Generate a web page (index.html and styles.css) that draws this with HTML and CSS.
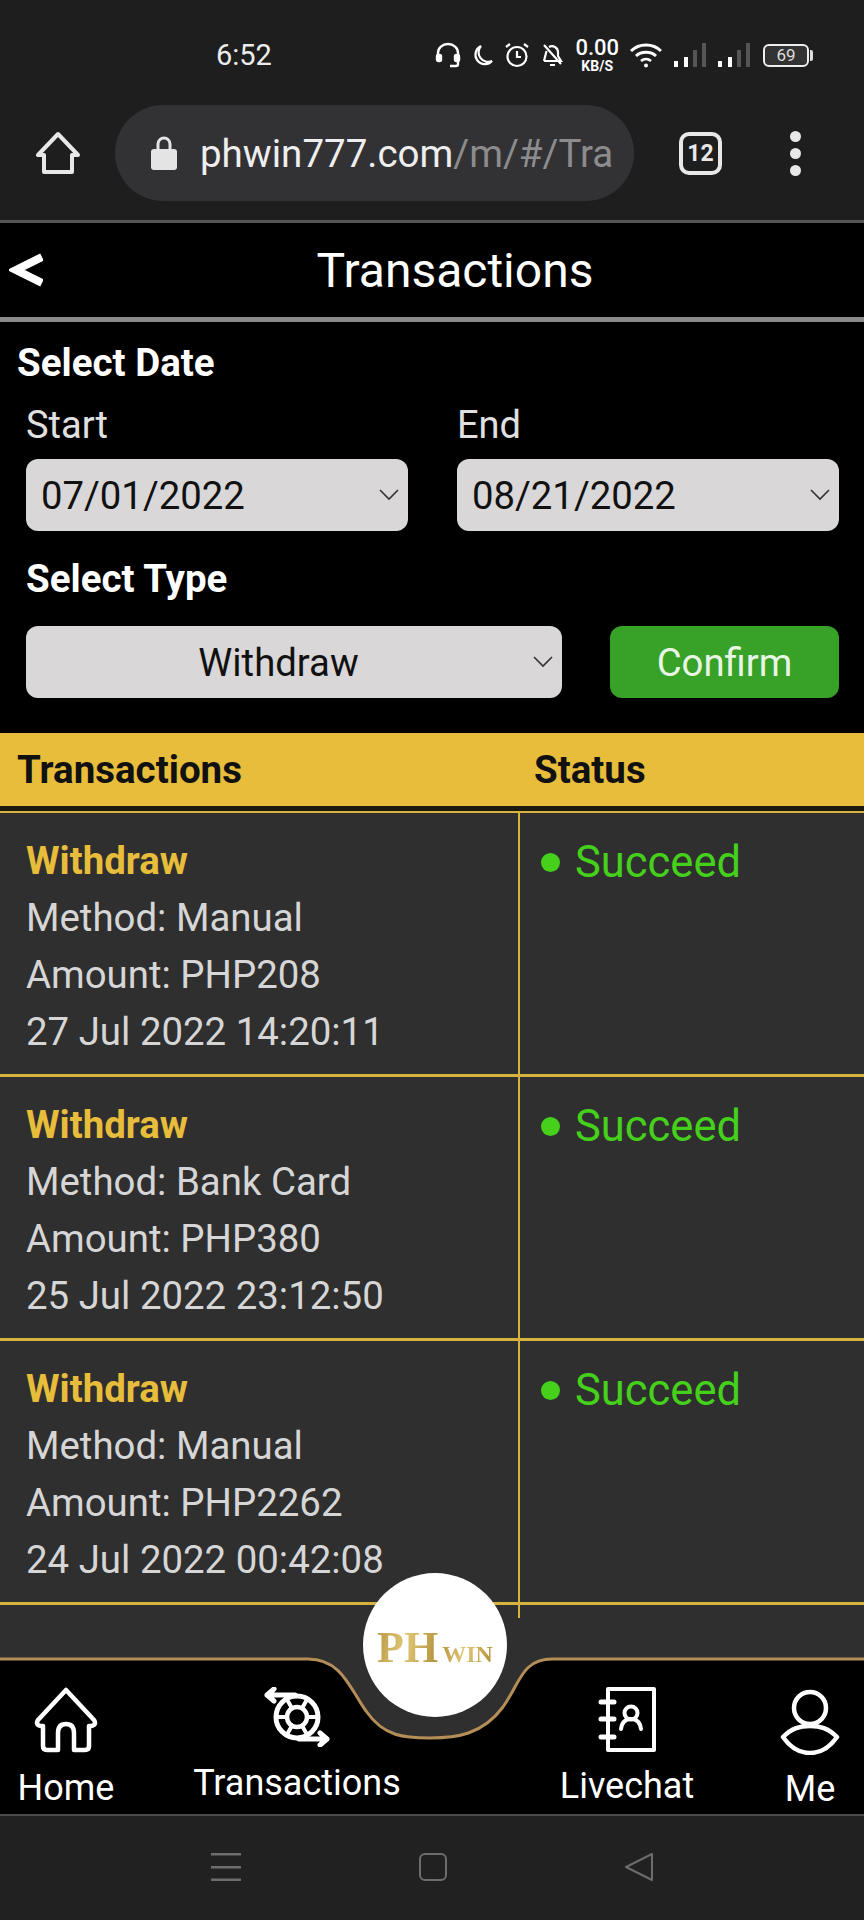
FILE: index.html
```html
<!DOCTYPE html>
<html lang="en">
<head>
  <meta charset="UTF-8" />
  <meta name="viewport" content="width=device-width, initial-scale=1.0"/>
  <title>Transactions</title>
  <link rel="stylesheet" href="styles.css">
</head>
<body>
  <div class="phone">
    <div class="status-bar">
      <span class="clock">6:52</span>
      <div class="status-icons">
        <svg width="26" height="26" viewBox="0 0 26 26" fill="none" stroke="#fff" stroke-width="2.4"><path d="M3 16V11a10 9 0 0 1 20 0v5"/><rect x="2" y="13" width="4" height="6" rx="1.5" fill="#fff"/><rect x="20" y="13" width="4" height="6" rx="1.5" fill="#fff"/><path d="M23 19v3a2 2 0 0 1-2 2h-6"/></svg>
        <svg class="moon" width="22" height="22" viewBox="0 0 22 22" fill="none" stroke="#fff" stroke-width="2.2"><path d="M9 2a9.500 9.500 0 0 0 11 15A9.500 9.500 0 1 1 9 2z"/></svg>
        <svg width="26" height="26" viewBox="0 0 26 26" fill="none" stroke="#fff" stroke-width="2.2"><circle cx="13" cy="14.500" r="9.500"/><path d="M13 9v6h4M2 5l4-3M24 5l-4-3"/></svg>
        <svg width="24" height="26" viewBox="0 0 24 26" fill="none" stroke="#fff" stroke-width="2.2"><path d="M4 19h17l-3-5V10a6 6 0 0 0-9-5M6.500 9L4 19"/><path d="M4 3l17 19M10 23h5"/></svg>
        <div class="speed"><span class="speed-num">0.00</span><span class="speed-unit">KB/S</span></div>
        <svg class="wifi" width="34" height="26" viewBox="0 0 34 26" fill="none" stroke="#fff" stroke-width="2.8"><path d="M2 9c8-8 22-8 30 0M7 14c5-5 15-5 20 0M12 19c3-2.500 7-2.500 10 0"/><circle cx="17" cy="23.500" r="2" fill="#fff" stroke="none"/></svg>
        <svg width="34" height="26" viewBox="0 0 34 26"><rect x="1" y="19" width="4" height="6" fill="#fff"/><rect x="11" y="15" width="4" height="10" fill="#fff"/><rect x="20" y="8" width="4" height="17" fill="#555"/><rect x="29" y="1" width="4" height="24" fill="#555"/></svg>
        <svg width="34" height="26" viewBox="0 0 34 26"><rect x="1" y="19" width="4" height="6" fill="#fff"/><rect x="11" y="15" width="4" height="10" fill="#fff"/><rect x="20" y="8" width="4" height="17" fill="#555"/><rect x="29" y="1" width="4" height="24" fill="#555"/></svg>
        <div class="battery"><span class="battery-level">69</span></div>
      </div>
    </div>

    <div class="toolbar">
      <svg class="tool-home" width="44" height="44" viewBox="0 0 44 44" fill="none" stroke="#e8e8e8" stroke-width="4" stroke-linejoin="round"><path d="M22 3L2 24h6v17h28V24h6z"/></svg>
      <div class="url-pill">
        <svg class="lock" width="28" height="36" viewBox="0 0 28 36"><path d="M8 16V9a6 6 0 0 1 12 0v7" fill="none" stroke="#e4e4e4" stroke-width="3"/><rect x="1" y="14" width="26" height="21" rx="3" fill="#e4e4e4"/></svg>
        <div class="url-text"><span class="url-host">phwin777.com</span>/m/#/Tra</div>
      </div>
      <div class="tab-count">12</div>
      <div class="tool-dots"><i></i><i></i><i></i></div>
    </div>

    <header class="app-header">
      <svg class="back" width="34" height="34" viewBox="0 0 34 34" fill="none" stroke="#fff" stroke-width="8"><path d="M33 4L7 17l26 13"/></svg>
      <h1>Transactions</h1>
    </header>

    <section class="filters">
      <h2 class="date-title">Select Date</h2>
      <div class="date-row">
        <div class="date-field">
          <label>Start</label>
          <div class="picker">07/01/2022<svg width="20" height="12" viewBox="0 0 20 12" fill="none" stroke="#333" stroke-width="1.600"><path d="M1 1l9 9 9-9"/></svg></div>
        </div>
        <div class="date-field">
          <label>End</label>
          <div class="picker">08/21/2022<svg width="20" height="12" viewBox="0 0 20 12" fill="none" stroke="#333" stroke-width="1.600"><path d="M1 1l9 9 9-9"/></svg></div>
        </div>
      </div>
      <h2 class="type-title">Select Type</h2>
      <div class="type-row">
        <div class="picker type-picker"><span>Withdraw</span><svg width="20" height="12" viewBox="0 0 20 12" fill="none" stroke="#333" stroke-width="1.600"><path d="M1 1l9 9 9-9"/></svg></div>
        <button class="confirm">Confirm</button>
      </div>
    </section>

    <section class="records">
      <div class="records-head">
        <div class="col-main">Transactions</div>
        <div class="col-status">Status</div>
      </div>
      <div class="head-gap"></div>

      <div class="record">
        <div class="col-main">
          <div class="record-type">Withdraw</div>
          <div>Method: Manual</div>
          <div>Amount: PHP208</div>
          <div>27 Jul 2022 14:20:11</div>
        </div>
        <div class="col-status"><i class="dot"></i>Succeed</div>
      </div>
      <div class="record">
        <div class="col-main">
          <div class="record-type">Withdraw</div>
          <div>Method: Bank Card</div>
          <div>Amount: PHP380</div>
          <div>25 Jul 2022 23:12:50</div>
        </div>
        <div class="col-status"><i class="dot"></i>Succeed</div>
      </div>
      <div class="record">
        <div class="col-main">
          <div class="record-type">Withdraw</div>
          <div>Method: Manual</div>
          <div>Amount: PHP2262</div>
          <div>24 Jul 2022 00:42:08</div>
        </div>
        <div class="col-status"><i class="dot"></i>Succeed</div>
      </div>
      <div class="records-tail"></div>
    </section>

    <nav class="bottom-nav">
      <svg class="notch" width="864" height="100" viewBox="0 0 864 100"><path d="M0 10H308C342 10 350 40 366 62C384 88 405 89 430 89C456 89 482 86 503 58C520 34 522 10 552 10H864V0H0Z" fill="#2f2f2f"/><path d="M0 10H308C342 10 350 40 366 62C384 88 405 89 430 89C456 89 482 86 503 58C520 34 522 10 552 10H864" fill="none" stroke="#b58d56" stroke-width="3"/></svg>
      <div class="logo"><span class="logo-ph">PH</span><span class="logo-win">WIN</span></div>

      <a class="nav-item nav-home">
        <svg width="66" height="66" viewBox="0 0 66 66" fill="none" stroke="#fff" stroke-width="4.500" stroke-linejoin="round"><path d="M33 3L5 33Q2 38 8 39H10V59Q10 63 14 63H25V46Q25 37 33 37Q41 37 41 46V63H52Q56 63 56 59V39H58Q64 38 61 33Z"/></svg>
        <span>Home</span>
      </a>
      <a class="nav-item nav-trans">
        <svg width="68" height="60" viewBox="0 0 68 60" fill="none" stroke="#fff" stroke-width="5" stroke-linecap="round" stroke-linejoin="round"><circle cx="34" cy="30" r="21"/><circle cx="34" cy="30" r="10" stroke-width="4.500"/><path d="M44 30h11M24 30H13M39 38.700l5.500 9.500M29 21.300l-5.500-9.500M39 21.300l5.500-9.500M29 38.700l-5.500 9.500" stroke-width="4"/><path d="M4 8H32M11 2L4 8l7 6"/><path d="M64 52H36M57 46l7 6-7 6"/></svg>
        <span>Transactions</span>
      </a>
      <a class="nav-item nav-chat">
        <svg width="60" height="66" viewBox="0 0 60 66" fill="none" stroke="#fff" stroke-width="4" stroke-linecap="round" stroke-linejoin="round"><rect x="11" y="3" width="46" height="61"/><path d="M4 16H17M4 33H17M4 51H17" stroke-width="5"/><circle cx="34" cy="27" r="6.500"/><path d="M24 43C25 36 29 33 34 33S43 36 44 43"/></svg>
        <span>Livechat</span>
      </a>
      <a class="nav-item nav-me">
        <svg width="60" height="66" viewBox="0 0 60 66" fill="none" stroke="#fff" stroke-width="4.500" stroke-linejoin="round"><circle cx="30" cy="19" r="16"/><path d="M3 48C12 39 20 37 30 37S48 39 57 48C50 58 40 64 30 64S10 58 3 48Z"/></svg>
        <span>Me</span>
      </a>
    </nav>

    <div class="system-nav">
      <svg width="30" height="28" viewBox="0 0 30 28" fill="#6d6d6d"><rect y="0" width="30" height="2.500"/><rect y="13" width="30" height="2.500"/><rect y="25.500" width="30" height="2.500"/></svg>
      <svg width="28" height="28" viewBox="0 0 28 28" fill="none" stroke="#6d6d6d" stroke-width="2"><rect x="1" y="1" width="26" height="26" rx="5"/></svg>
      <svg width="28" height="28" viewBox="0 0 28 28" fill="none" stroke="#6d6d6d" stroke-width="2" stroke-linejoin="round"><path d="M27 1V27L1 14Z"/></svg>
    </div>
  </div>
</body>
</html>
```

FILE: styles.css
```css
body {
  margin: 0;
  background-color: #000;
  font-family: Roboto, 'Liberation Sans', sans-serif;
  color: #fff;
}

.phone {
  width: 864px;
  height: 1920px;
  display: flex;
  flex-direction: column;
  overflow: hidden;
}

/* android status bar */
.status-bar {
  height: 100px;
  background-color: #1e1e1f;
  display: flex;
  align-items: center;
  justify-content: space-between;
  padding: 10px 55px 0 216px;
  box-sizing: border-box;
  flex: none;
}

.clock {
  font-size: 29px;
  color: #ececec;
}

.status-icons {
  display: flex;
  align-items: center;
  gap: 10px;
}

.moon {
  margin-left: 1px;
}

.speed {
  display: flex;
  flex-direction: column;
  align-items: center;
  line-height: 1;
  margin-left: 1px;
}

.speed-num {
  font-size: 22px;
  font-weight: 500;
}

.speed-unit {
  font-size: 14px;
  font-weight: 700;
}

.battery {
  width: 46px;
  height: 23px;
  border: 2px solid #eee;
  border-radius: 6px;
  margin-left: 2px;
  box-sizing: border-box;
  text-align: center;
  font-size: 17px;
  line-height: 19px;
  position: relative;
  background-color: #333;
  color: #ddd;
}

.battery::after {
  content: "";
  position: absolute;
  right: -6px;
  top: 4px;
  width: 3px;
  height: 11px;
  background-color: #ddd;
  border-radius: 0 2px 2px 0;
}

/* browser toolbar */
.toolbar {
  height: 123px;
  background-color: #1e1e1f;
  border-bottom: 3px solid #555;
  box-sizing: border-box;
  display: flex;
  align-items: center;
  padding: 0 0 14px 36px;
  flex: none;
}

.url-pill {
  width: 519px;
  height: 96px;
  margin-left: 35px;
  border-radius: 48px;
  background-color: #323235;
  box-sizing: border-box;
  padding: 0 18px 0 35px;
  display: flex;
  align-items: center;
  gap: 22px;
}

.lock {
  flex: none;
}

.url-text {
  font-size: 38.500px;
  color: #8c8c8e;
  white-space: nowrap;
}

.url-host {
  color: #eee;
}

.tab-count {
  width: 43px;
  height: 43px;
  border: 4px solid #e8e8e8;
  border-radius: 10px;
  box-sizing: border-box;
  margin-left: 45px;
  text-align: center;
  font-size: 23px;
  font-weight: 700;
  line-height: 35px;
  color: #e8e8e8;
}

.tool-dots {
  margin-left: 68px;
  display: flex;
  flex-direction: column;
  gap: 6px;
}

.tool-dots i {
  width: 11px;
  height: 11px;
  border-radius: 50%;
  background-color: #e8e8e8;
}

/* app header */
.app-header {
  height: 99px;
  background-color: #000;
  border-bottom: 5px solid #8a8a8a;
  box-sizing: border-box;
  display: flex;
  align-items: center;
  justify-content: center;
  position: relative;
  flex: none;
}

.app-header h1 {
  margin: 0 0 0 46px;
  font-size: 48px;
  font-weight: 400;
}

.back {
  position: absolute;
  left: 9px;
  top: 30px;
}

/* filter form */
.filters {
  height: 411px;
  background-color: #000;
  box-sizing: border-box;
  padding: 21px 25px 0 26px;
  flex: none;
}

.filters h2 {
  margin: 0;
  font-size: 38.500px;
  font-weight: 700;
  line-height: 40px;
}

.date-title {
  margin-left: -9px !important;
}

.date-row {
  display: flex;
  gap: 49px;
  margin-top: 22px;
}

.date-field {
  width: 382px;
}

.date-field label {
  display: block;
  font-size: 38px;
  line-height: 40px;
  color: #e0e0e0;
  margin-bottom: 14px;
}

.picker {
  height: 72px;
  border-radius: 12px;
  background-color: #d9d7d8;
  color: #111;
  font-size: 38.300px;
  display: flex;
  align-items: center;
  justify-content: space-between;
  padding: 0 9px 0 15px;
  box-sizing: border-box;
}

.type-title {
  margin-top: 28px !important;
}

.type-row {
  display: flex;
  justify-content: space-between;
  margin-top: 27px;
}

.type-picker {
  width: 536px;
}

.type-picker span {
  flex: 1;
  padding-right: 17px;
  text-align: center;
}

.confirm {
  width: 229px;
  height: 72px;
  border: none;
  border-radius: 12px;
  background-color: #38a128;
  color: #e8f5e4;
  font-family: inherit;
  font-size: 38.300px;
}

/* transaction table */
.records {
  flex: 1;
  background-color: #2f2f2f;
}

.records-head {
  height: 73px;
  background-color: #e8bd3b;
  color: #111;
  font-size: 38.500px;
  font-weight: 700;
  display: flex;
  align-items: center;
}

.records-head .col-main {
  width: 534px;
  padding-left: 17px;
  box-sizing: border-box;
}

.head-gap {
  height: 5px;
  background-color: #1a1a10;
  border-bottom: 2px solid #d8b23f;
}

.record {
  display: flex;
  height: 264px;
  border-bottom: 3px solid #d8b23f;
  box-sizing: border-box;
  margin-top: 0;
}

.record .col-main {
  width: 520px;
  box-sizing: border-box;
  padding: 19px 0 0 26px;
  border-right: 2px solid #d8b23f;
  font-size: 38.400px;
  line-height: 57px;
  color: #d6d6d6;
}

.record-type {
  font-weight: 700;
  color: #e8bd3b;
}

.record .col-status {
  padding: 21px 0 0 21px;
  font-size: 43.500px;
  line-height: 57px;
  color: #45d01c;
  display: flex;
  align-items: flex-start;
}

.dot {
  width: 19px;
  height: 19px;
  margin: 19px 15px 0 0;
  border-radius: 50%;
  background-color: #45d01c;
}

.records-tail {
  width: 520px;
  height: 13px;
  box-sizing: border-box;
  border-right: 2px solid #d8b23f;
}

/* bottom nav */
.bottom-nav {
  height: 157px;
  background-color: #000;
  border-bottom: 2px solid #4a4a4a;
  box-sizing: border-box;
  display: flex;
  position: relative;
  flex: none;
}

.notch {
  position: absolute;
  left: 0;
  top: -10px;
}

.logo {
  position: absolute;
  left: 363px;
  top: -86px;
  width: 144px;
  height: 144px;
  border-radius: 50%;
  background-color: #fff;
  display: flex;
  align-items: baseline;
  justify-content: center;
  padding-top: 50px;
  box-sizing: border-box;
  font-family: 'Liberation Serif', serif;
  font-weight: 700;
}

.logo-ph,
.logo-win {
  background: linear-gradient(100deg, #b8953f, #e0c878 45%, #b08c35);
  -webkit-background-clip: text;
  background-clip: text;
  color: transparent;
}

.logo-ph {
  font-size: 44px;
  line-height: 50px;
}

.logo-win {
  font-size: 24px;
  margin-left: 4px;
}

.nav-item {
  display: flex;
  flex-direction: column;
  align-items: center;
  font-size: 36px;
  flex: none;
  position: relative;
}

.nav-home {
  width: 132px;
  padding-top: 28px;
}

.nav-home span {
  margin-top: 14px;
}

.nav-trans {
  width: 330px;
  padding-top: 28px;
}

.nav-trans span {
  margin-top: 15px;
}

.nav-chat {
  width: 258px;
  margin-left: 36px;
  padding-top: 27px;
}

.nav-chat span {
  margin-top: 13px;
}

.nav-me {
  width: 108px;
  padding-top: 30px;
}

.nav-me span {
  margin-top: 13px;
}

/* android nav buttons */
.system-nav {
  height: 104px;
  background-color: #212121;
  display: flex;
  align-items: flex-start;
  padding: 37px 0 0 211px;
  gap: 178px;
  box-sizing: border-box;
  flex: none;
}
```
